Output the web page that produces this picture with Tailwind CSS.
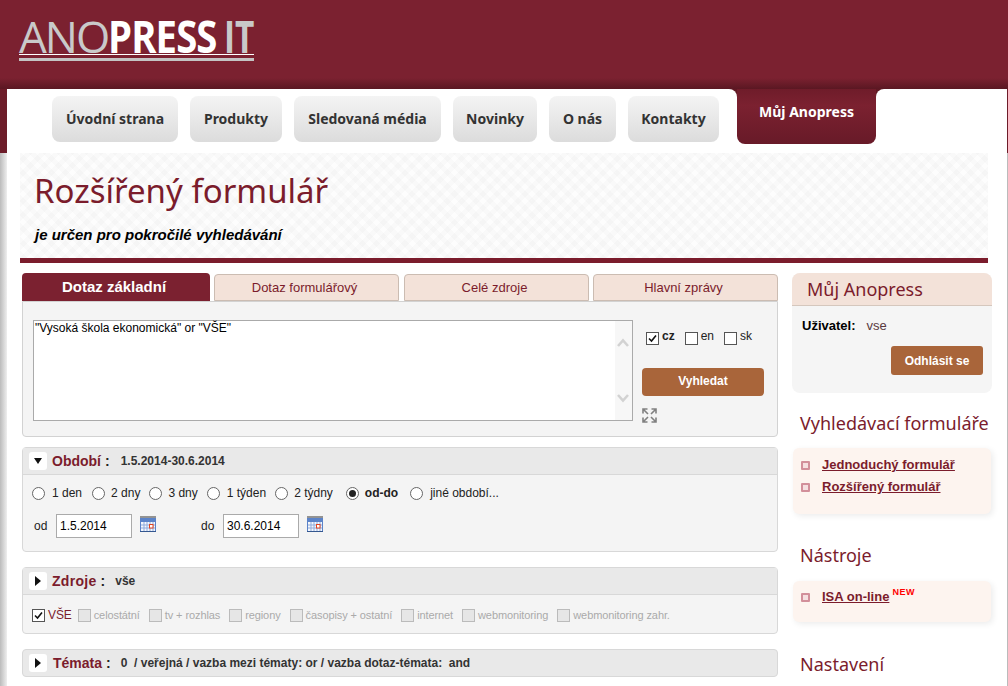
<!DOCTYPE html>
<html lang="en">
<head>
    <meta charset="UTF-8">
    <title>Anopress IT</title>
    <script src="https://cdn.jsdelivr.net/npm/@tailwindcss/browser@4"></script>
</head>
<body class="h-[686px] overflow-hidden bg-white font-['Liberation_Sans',sans-serif] text-[12px] text-[#222]">

    <!-- Header with logo -->
    <header class="h-[89px] bg-[linear-gradient(#7b2130_0,#7b2130_78px,#5a1722_89px)] pl-[19px] pt-[18px]">
        <div class="w-[235px] border-b-[3px] border-[#c4c4c4] pb-[3px]">
            <div class="flex h-[37px] border-b border-white font-['Open_Sans',sans-serif] text-[44px] leading-[37px] whitespace-nowrap">
                <span class="w-[93px] font-normal tracking-[-2px] text-[#c9c9c9]">ANO</span>
                <span class="inline-block w-[116px] origin-left scale-x-[.87] font-bold tracking-[-1px] text-white">PRESS</span>
                <span class="inline-block origin-left scale-x-[.76] font-bold text-[#c9c9c9]">IT</span>
            </div>
        </div>
    </header>

    <div class="relative bg-white">
        <!-- Page side edges -->
        <div class="absolute left-0 top-0 h-[64px] w-[7px] bg-[#6d1c29]"></div>
        <div class="absolute left-0 top-[64px] h-[540px] w-[7px] bg-[linear-gradient(90deg,#bbb,#eee)]"></div>
        <div class="absolute right-0 top-0 h-[64px] w-[1px] bg-[#6d1c29]"></div>
        <div class="absolute right-0 top-[64px] h-[540px] w-[1px] bg-[#bbb]"></div>

        <!-- Main menu -->
        <nav class="flex h-[64px] gap-3 pl-[52px] pt-[7px] font-['Noto_Sans',sans-serif] text-[14px] font-bold text-[#333]">
            <a class="flex h-[46px] w-[126px] items-center justify-center rounded-lg bg-gradient-to-b from-[#f4f4f4] to-[#dcdcdc] pb-[2px]">Úvodní strana</a>
            <a class="flex h-[46px] w-[92px] items-center justify-center rounded-lg bg-gradient-to-b from-[#f4f4f4] to-[#dcdcdc] pb-[2px]">Produkty</a>
            <a class="flex h-[46px] w-[147px] items-center justify-center rounded-lg bg-gradient-to-b from-[#f4f4f4] to-[#dcdcdc] pb-[2px]">Sledovaná média</a>
            <a class="flex h-[46px] w-[84px] items-center justify-center rounded-lg bg-gradient-to-b from-[#f4f4f4] to-[#dcdcdc] pb-[2px]">Novinky</a>
            <a class="flex h-[46px] w-[67px] items-center justify-center rounded-lg bg-gradient-to-b from-[#f4f4f4] to-[#dcdcdc] pb-[2px]">O nás</a>
            <a class="flex h-[46px] w-[91px] items-center justify-center rounded-lg bg-gradient-to-b from-[#f4f4f4] to-[#dcdcdc] pb-[2px]">Kontakty</a>
            <a class="relative -mt-[7px] ml-[6px] flex h-[55px] w-[139px] justify-center rounded-b-lg bg-[linear-gradient(#6f1c2a,#7b2130_30%,#681a28)] pt-[12px] text-white">
                Můj Anopress
                <!-- concave corners where the white page meets the tab -->
                <span class="absolute left-[-8px] top-0 size-[8px] bg-[#5f1823]"><span class="block size-full rounded-tr-lg bg-white"></span></span>
                <span class="absolute right-[-8px] top-0 size-[8px] bg-[#5f1823]"><span class="block size-full rounded-tl-lg bg-white"></span></span>
            </a>
        </nav>

        <!-- Page title -->
        <div class="mx-[20px] h-[110px] border-b-[5px] border-[#7b1c2c] bg-[#fdfdfd] bg-[repeating-linear-gradient(45deg,rgba(0,0,0,.014)_0_5px,transparent_5px_10px),repeating-linear-gradient(-45deg,rgba(0,0,0,.014)_0_5px,transparent_5px_10px)] pl-[14px]">
            <h1 class="pt-[15px] font-['Noto_Sans',sans-serif] text-[33px] leading-[45px] text-[#7b1c2c]">Rozšířený formulář</h1>
            <p class="pl-[1px] pt-[13px] text-[15px] font-bold italic leading-[18px] text-black">je určen pro pokročilé vyhledávání</p>
        </div>

        <div class="flex gap-[14px] pl-[22px] pt-[10px]">
            <!-- Left column -->
            <main class="w-[756px]">
                <div class="flex items-end text-[13px] text-[#7b1c2c]">
                    <div class="mr-[4px] flex h-[28px] w-[188px] items-center justify-center rounded-t bg-[#7b2130] pr-[4px] text-[15px] font-bold text-white">Dotaz základní</div>
                    <div class="mr-[5px] flex h-[27px] w-[185px] items-center justify-center rounded-t border border-[#cbbcb2] bg-[#f3e2d9] pr-[4px]">Dotaz formulářový</div>
                    <div class="mr-[4px] flex h-[27px] w-[185px] items-center justify-center rounded-t border border-[#cbbcb2] bg-[#f3e2d9] pr-[4px]">Celé zdroje</div>
                    <div class="flex h-[27px] w-[185px] items-center justify-center rounded-t border border-[#cbbcb2] bg-[#f3e2d9] pr-[4px]">Hlavní zprávy</div>
                </div>

                <!-- Query box -->
                <div class="flex h-[136px] rounded-b border border-[#d2d2d2] bg-[#f4f4f4] pl-[10px] pt-[18px]">
                    <div class="relative h-[101px] w-[600px] border border-[#aaa] bg-white px-[1px] leading-[15px] text-black">
                        "Vysoká škola ekonomická" or "VŠE"
                        <div class="absolute right-0 top-0 h-full w-[17px] bg-[#f7f7f7]">
                            <svg class="absolute left-[2px] top-[17px]" width="12" height="9" viewBox="0 0 12 9" fill="none" stroke="#d2d2d2" stroke-width="2.600"><path d="M1 8l5-5.500 5 5.500"/></svg>
                            <svg class="absolute left-[2px] top-[73px]" width="12" height="9" viewBox="0 0 12 9" fill="none" stroke="#d2d2d2" stroke-width="2.600"><path d="M1 1l5 5.500 5-5.500"/></svg>
                        </div>
                    </div>
                    <div class="ml-[9px] w-[122px] pt-[11px]">
                        <div class="flex items-center pl-[4px]">
                            <span class="flex size-[13px] shrink-0 items-center justify-center border border-[#555] bg-white">
                                <svg width="9" height="9" viewBox="0 0 9 9" fill="none" stroke="#111" stroke-width="1.600"><path d="M1 4.500l2.500 2.500L8 1.500"/></svg>
                            </span>
                            <b class="-mt-[4px] ml-[3px] mr-[10px]">cz</b>
                            <span class="size-[13px] shrink-0 border border-[#555] bg-white"></span>
                            <span class="-mt-[4px] ml-[3px] mr-[10px]">en</span>
                            <span class="size-[13px] shrink-0 border border-[#555] bg-white"></span>
                            <span class="-mt-[4px] ml-[3px]">sk</span>
                        </div>
                        <button class="mt-[23px] block h-[28px] w-[122px] rounded-[4px] bg-[#a9653a] pb-[2px] font-bold text-white">Vyhledat</button>
                        <svg class="mt-[12px] block" width="15" height="15" viewBox="0 0 15 15" fill="none" stroke="#808080" stroke-width="1.600"><path d="M1 5.500V1h4.500M1.500 1.500L6 6M9.500 1H14v4.500M13.500 1.500L9 6M1 9.500V14h4.500M1.500 13.500L6 9M9.500 14H14V9.500M13.500 13.500L9 9"/></svg>
                    </div>
                </div>

                <!-- Obdobi -->
                <section class="mt-[10px] h-[105px] rounded border border-[#d8d8d8] bg-[#f4f4f4]">
                    <div class="flex h-[27px] items-center border-b border-[#d8d8d8] bg-[#e9e9e9] pl-[6px]">
                        <span class="flex h-[18px] w-[18px] items-center justify-center rounded-[3px] bg-white"><svg width="10" height="6" viewBox="0 0 10 6"><path d="M1 0h8L5 6z" fill="#111"/></svg></span>
                        <b class="ml-[5px] text-[14px] text-[#7b1c2c]">Období</b><b class="ml-[4px] text-[14px] text-[#222]">:</b>
                        <b class="ml-[11px] text-[12px] text-[#333]">1.5.2014-30.6.2014</b>
                    </div>
                    <div class="flex items-center pl-[9px] pt-[10px] leading-[16px]">
                        <span class="size-[13px] rounded-full border border-[#666] bg-white"></span><span class="ml-[7px] mr-[10px]">1 den</span>
                        <span class="size-[13px] rounded-full border border-[#666] bg-white"></span><span class="ml-[6px] mr-[9px]">2 dny</span>
                        <span class="size-[13px] rounded-full border border-[#666] bg-white"></span><span class="ml-[6px] mr-[9px]">3 dny</span>
                        <span class="size-[13px] rounded-full border border-[#666] bg-white"></span><span class="ml-[7px] mr-[9px]">1 týden</span>
                        <span class="size-[13px] rounded-full border border-[#666] bg-white"></span><span class="ml-[6px] mr-[13px]">2 týdny</span>
                        <span class="flex size-[13px] items-center justify-center rounded-full border border-[#666] bg-white"><span class="size-[7px] rounded-full bg-[#222]"></span></span><b class="ml-[6px] mr-[12px]">od-do</b>
                        <span class="size-[13px] rounded-full border border-[#666] bg-white"></span><span class="ml-[7px]">jiné období...</span>
                    </div>
                    <div class="flex items-center pl-[11px] pt-[13px]">
                        <span class="w-[22px]">od</span>
                        <div class="flex h-[24px] w-[76px] items-center border border-[#aaa] bg-white pl-[3px] text-black">1.5.2014</div>
                        <svg class="mb-[4px] ml-[8px]" width="16" height="16" viewBox="0 0 16 16"><rect y="2" width="16" height="14" fill="#5b83c9"/><path d="M1 0v2M3 0v2M5 0v2M7 0v2M9 0v2M11 0v2M13 0v2M15 0v2" stroke="#333"/><rect x="1" y="6" width="14" height="9" fill="#f4f7fc"/><path d="M1 9h14M1 12h14M4 6v9M7 6v9M10 6v9M13 6v9" stroke="#8fabdc"/><rect x="9.500" y="8.500" width="3.500" height="3.500" fill="#fff" stroke="#e0431f"/><rect y="15" width="16" height="1" fill="#34578f"/></svg>
                        <span class="ml-[45px] w-[22px]">do</span>
                        <div class="flex h-[24px] w-[76px] items-center border border-[#aaa] bg-white pl-[3px] text-black">30.6.2014</div>
                        <svg class="mb-[4px] ml-[8px]" width="16" height="16" viewBox="0 0 16 16"><rect y="2" width="16" height="14" fill="#5b83c9"/><path d="M1 0v2M3 0v2M5 0v2M7 0v2M9 0v2M11 0v2M13 0v2M15 0v2" stroke="#333"/><rect x="1" y="6" width="14" height="9" fill="#f4f7fc"/><path d="M1 9h14M1 12h14M4 6v9M7 6v9M10 6v9M13 6v9" stroke="#8fabdc"/><rect x="9.500" y="8.500" width="3.500" height="3.500" fill="#fff" stroke="#e0431f"/><rect y="15" width="16" height="1" fill="#34578f"/></svg>
                    </div>
                </section>

                <!-- Zdroje -->
                <section class="mt-[15px] h-[67px] rounded border border-[#d8d8d8] bg-[#f4f4f4]">
                    <div class="flex h-[27px] items-center border-b border-[#d8d8d8] bg-[#e9e9e9] pl-[6px]">
                        <span class="flex h-[18px] w-[18px] items-center justify-center rounded-[3px] bg-white"><svg width="6" height="10" viewBox="0 0 6 10"><path d="M0 0v10l6-5z" fill="#111"/></svg></span>
                        <b class="ml-[5px] text-[14px] tracking-[.3px] text-[#7b1c2c]">Zdroje</b><b class="ml-[4px] text-[14px] text-[#222]">:</b>
                        <b class="ml-[10px] text-[12px] text-[#333]">vše</b>
                    </div>
                    <div class="flex items-center pl-[9px] pt-[13px] text-[11px] leading-[14px] tracking-[-.1px] text-[#aaa]">
                        <span class="flex size-[13px] items-center justify-center border border-[#555] bg-white"><svg width="9" height="9" viewBox="0 0 9 9" fill="none" stroke="#111" stroke-width="1.600"><path d="M1 4.500l2.500 2.500L8 1.500"/></svg></span>
                        <span class="ml-[3px] mr-[6px] text-[12px] text-[#7b1c2c]">VŠE</span>
                        <span class="size-[13px] border border-[#bbb] bg-[#e6e6e6]"></span><span class="ml-[3px] mr-[9px]">celostátní</span>
                        <span class="size-[13px] border border-[#bbb] bg-[#e6e6e6]"></span><span class="ml-[3px] mr-[9px]">tv + rozhlas</span>
                        <span class="size-[13px] border border-[#bbb] bg-[#e6e6e6]"></span><span class="ml-[3px] mr-[9px]">regiony</span>
                        <span class="size-[13px] border border-[#bbb] bg-[#e6e6e6]"></span><span class="ml-[3px] mr-[9px]">časopisy + ostatní</span>
                        <span class="size-[13px] border border-[#bbb] bg-[#e6e6e6]"></span><span class="ml-[3px] mr-[9px]">internet</span>
                        <span class="size-[13px] border border-[#bbb] bg-[#e6e6e6]"></span><span class="ml-[3px] mr-[9px]">webmonitoring</span>
                        <span class="size-[13px] border border-[#bbb] bg-[#e6e6e6]"></span><span class="ml-[3px]">webmonitoring zahr.</span>
                    </div>
                </section>

                <!-- Temata -->
                <section class="mt-[15px] flex h-[28px] items-center rounded border border-[#d8d8d8] bg-[#e9e9e9] pl-[6px]">
                    <span class="flex h-[18px] w-[18px] items-center justify-center rounded-[3px] bg-white"><svg width="6" height="10" viewBox="0 0 6 10"><path d="M0 0v10l6-5z" fill="#111"/></svg></span>
                    <b class="ml-[6px] text-[14px] text-[#7b1c2c]">Témata</b><b class="ml-[4px] text-[14px] text-[#222]">:</b>
                    <b class="ml-[10px] text-[12px] text-[#333]">0&nbsp;&nbsp;/ veřejná / vazba mezi tématy: or / vazba dotaz-témata:&nbsp; and</b>
                </section>
            </main>

            <!-- Right column -->
            <aside class="w-[200px]">
                <div class="h-[120px] rounded-lg bg-[#f5f5f5]">
                    <div class="h-[33px] rounded-t-lg border-b border-[#d5c7bd] bg-[#f3e2d9] pl-[15px] font-['Noto_Sans',sans-serif] text-[18px] leading-[33px] text-[#7b1c2c]">Můj Anopress</div>
                    <div class="pl-[10px] pt-[13px] text-[13px] leading-[14px]"><b class="text-black">Uživatel:</b><span class="ml-[11px] text-[#5a3a40]">vse</span></div>
                    <div class="flex justify-end pr-[9px] pt-[13px]">
                        <button class="h-[29px] w-[92px] rounded-[3px] bg-[#a9653a] font-bold text-white">Odhlásit se</button>
                    </div>
                </div>

                <h2 class="pl-[8px] pt-[18px] font-['Noto_Sans',sans-serif] text-[18px] leading-[24px] text-[#7b1c2c]">Vyhledávací formuláře</h2>
                <ul class="mx-[1px] mt-[13px] h-[66px] rounded-md bg-[#fdf4ef] pl-[8px] pt-[6px] text-[13px] font-bold text-[#7b1c2c] shadow-[2px_2px_6px_rgba(0,0,0,.08)]">
                    <li class="flex h-[22px] items-center gap-[12px]"><span class="size-[9px] rounded-[1px] border-2 border-[#d28f9a] bg-[#f5dfe0]"></span><a class="underline">Jednoduchý formulář</a></li>
                    <li class="flex h-[22px] items-center gap-[12px]"><span class="size-[9px] rounded-[1px] border-2 border-[#d28f9a] bg-[#f5dfe0]"></span><a class="underline">Rozšířený formulář</a></li>
                </ul>

                <h2 class="pl-[8px] pt-[29px] font-['Noto_Sans',sans-serif] text-[18px] leading-[24px] text-[#7b1c2c]">Nástroje</h2>
                <ul class="mx-[1px] mt-[14px] h-[41px] rounded-md bg-[#fdf4ef] pl-[8px] pt-[5px] text-[13px] font-bold text-[#7b1c2c] shadow-[2px_2px_6px_rgba(0,0,0,.08)]">
                    <li class="flex h-[22px] items-center gap-[12px]"><span class="size-[9px] rounded-[1px] border-2 border-[#d28f9a] bg-[#f5dfe0]"></span><a class="underline">ISA on-line</a><span class="-ml-[9px] -mt-[10px] text-[9px] leading-[10px] tracking-[.5px] text-[#f00]">NEW</span></li>
                </ul>

                <h2 class="pl-[8px] pt-[30px] font-['Noto_Sans',sans-serif] text-[18px] leading-[24px] text-[#7b1c2c]">Nastavení</h2>
            </aside>
        </div>
    </div>

</body>
</html>
